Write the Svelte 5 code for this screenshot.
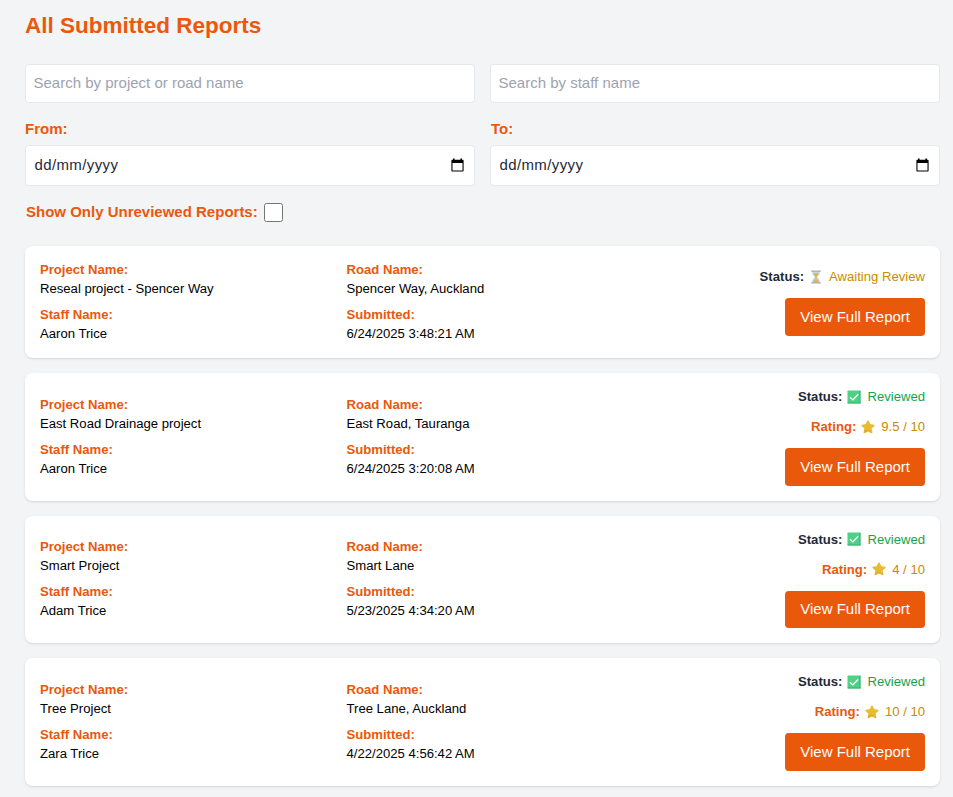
<script>
  const reports = [
    { project: 'Reseal project - Spencer Way', road: 'Spencer Way, Auckland', staff: 'Aaron Trice', submitted: '6/24/2025 3:48:21 AM', rating: null },
    { project: 'East Road Drainage project', road: 'East Road, Tauranga', staff: 'Aaron Trice', submitted: '6/24/2025 3:20:08 AM', rating: '9.5' },
    { project: 'Smart Project', road: 'Smart Lane', staff: 'Adam Trice', submitted: '5/23/2025 4:34:20 AM', rating: '4' },
    { project: 'Tree Project', road: 'Tree Lane, Auckland', staff: 'Zara Trice', submitted: '4/22/2025 4:56:42 AM', rating: '10' }
  ];
</script>

{#snippet field(label, value)}
  <div class="field">
    <div class="label">{label}</div>
    <div class="value">{value}</div>
  </div>
{/snippet}

{#snippet dateField(label)}
  <div class="date-group">
    <div class="date-label">{label}</div>
    <div class="date-input">
      <span>dd/mm/yyyy</span>
      <svg width="13" height="14" viewBox="0 0 13 14">
        <path d="M2 .4h1.600v1.400h5.800V.4H11v1.400h.6c.6 0 1 .4 1 1v9.800c0 .6-.4 1-1 1H1.400c-.6 0-1-.4-1-1V2.800c0-.6.4-1 1-1H2zM1.500 5v7.600h10V5z" fill="#000" fill-rule="evenodd" />
      </svg>
    </div>
  </div>
{/snippet}

<main>
  <h1>All Submitted Reports</h1>

  <div class="filters">
    <input class="search" type="text" placeholder="Search by project or road name" />
    <input class="search" type="text" placeholder="Search by staff name" />
    {@render dateField('From:')}
    {@render dateField('To:')}
  </div>

  <label class="toggle">
    <span>Show Only Unreviewed Reports:</span>
    <input type="checkbox" />
  </label>

  <div class="list">
    {#each reports as r}
      <article class="card">
        <div class="details">
          {@render field('Project Name:', r.project)}
          {@render field('Road Name:', r.road)}
          {@render field('Staff Name:', r.staff)}
          {@render field('Submitted:', r.submitted)}
        </div>
        <div class="side">
          <div class="line">
            <b class="dark">Status:</b>
            {#if r.rating}
              <svg width="14" height="14" viewBox="0 0 14 14">
                <rect x=".5" y=".5" width="13" height="13" rx=".8" fill="#4fd087" />
                <path d="M.5 13h13M13 .5v13" stroke="#36a866" stroke-width=".8" />
                <path d="M3 7.200l2.900 2.700L11.200 4.200" fill="none" stroke="#fff" stroke-width="1.300" />
              </svg>
              <span class="green">Reviewed</span>
            {:else}
              <svg width="14" height="14" viewBox="0 0 14 14">
                <path d="M3 1.500h8c0 3-1.500 4.200-3 5.500 1.500 1.300 3 2.500 3 5.500H3c0-3 1.500-4.200 3-5.500C4.500 5.700 3 4.500 3 1.500z" fill="#bcd8ea" />
                <path d="M4.300 3.200h5.400C9.200 5 8.200 5.900 7.500 6.900v2.200l2.700 2.900H3.800l2.700-2.900V6.900C5.800 5.900 4.800 5 4.300 3.200z" fill="#e9b23c" />
                <path d="M2.200.4h9.600v1.400H2.200zM2.200 12.200h9.600v1.400H2.200z" fill="#a6a6a6" />
              </svg>
              <span class="amber">Awaiting Review</span>
            {/if}
          </div>
          {#if r.rating}
            <div class="line">
              <b>Rating:</b>
              <svg width="14" height="14" viewBox="0 0 14 14">
                <path d="M7 1.200l1.800 3.600 4.100.6-3 2.900.8 4.300L7 10.700l-3.700 1.900.8-4.300-3-2.900 4.100-.6z" fill="#e8bb32" stroke="#e8bb32" stroke-width="1.500" stroke-linejoin="round" />
                <path d="M3 13l.7-2.200L7 9.300l4 3.700-4-1.900z" fill="#d69b22" opacity=".5" />
              </svg>
              <span class="amber">{r.rating} / 10</span>
            </div>
          {/if}
          <button>View Full Report</button>
        </div>
      </article>
    {/each}
  </div>
</main>

<style>
  :global(body) {
    background: #f3f4f6;
  }
  main {
    box-sizing: border-box;
    height: 797px;
    overflow: hidden;
    padding: 11px 13px 0 25px;
    font-family: 'Liberation Sans', Arial, sans-serif;
    font-size: 15px;
    line-height: 22.5px;
    color: #1f2937;
  }
  h1 {
    margin: 0 0 23px;
    font-size: 22.5px;
    line-height: 30px;
    color: #ea580c;
  }
  .filters {
    display: grid;
    grid-template-columns: 450px 450px;
    column-gap: 15px;
    row-gap: 15px;
  }
  .search,
  .date-input {
    box-sizing: border-box;
    width: 100%;
    border: 1px solid #e5e7eb;
    border-radius: 3.75px;
    background: #fff;
    color: #1f2937;
    font: inherit;
  }
  .search {
    height: 39px;
    padding: 6.5px 7.5px 8.5px;
  }
  .search::placeholder {
    color: #9ca3af;
    opacity: 1;
  }
  .date-label,
  .toggle {
    font-weight: 700;
    color: #ea580c;
  }
  .date-label {
    height: 27px;
  }
  .date-group:last-child .date-label {
    padding-left: 1px;
  }
  .date-input {
    display: flex;
    align-items: center;
    justify-content: space-between;
    height: 41px;
    padding: 0 10px 0 8.5px;
  }
  .date-input span {
    letter-spacing: 0.38px;
  }
  .date-input svg {
    margin-bottom: 1px;
  }
  .toggle {
    display: flex;
    align-items: center;
    gap: 6.5px;
    width: max-content;
    margin-top: 15px;
    padding-left: 1px;
  }
  .toggle input {
    width: 19px;
    height: 19px;
    margin: 0;
  }
  .list {
    display: flex;
    flex-direction: column;
    gap: 15px;
    width: 915px;
    margin-top: 22.1px;
  }
  .card {
    display: flex;
    align-items: center;
    justify-content: space-between;
    padding: 15px;
    border-radius: 7.5px;
    background: #fff;
    box-shadow: 0 1px 3px rgba(0, 0, 0, 0.1), 0 1px 2px -1px rgba(0, 0, 0, 0.1);
    font-size: 13.125px;
    line-height: 18.75px;
  }
  .details {
    display: grid;
    grid-template-columns: 306.5px auto;
    row-gap: 7.5px;
    color: #000;
  }
  .label {
    height: 19px;
  }
  .value {
    height: 18.5px;
  }
  .label,
  b {
    font-weight: 700;
    color: #ea580c;
  }
  .side {
    display: flex;
    flex-direction: column;
    align-items: flex-end;
    gap: 11.25px;
  }
  .line {
    display: flex;
    align-items: center;
    height: 18.75px;
  }
  .line svg {
    margin: 0 6px 1px 5px;
  }
  .line .dark {
    color: #1f2937;
  }
  .green {
    color: #16a34a;
  }
  .amber {
    color: #ca8a04;
  }
  button {
    height: 37.5px;
    padding: 1px 15px 0;
    border: 0;
    border-radius: 3.75px;
    background: #ea580c;
    color: #fff;
    font: inherit;
    font-size: 15px;
  }
</style>
